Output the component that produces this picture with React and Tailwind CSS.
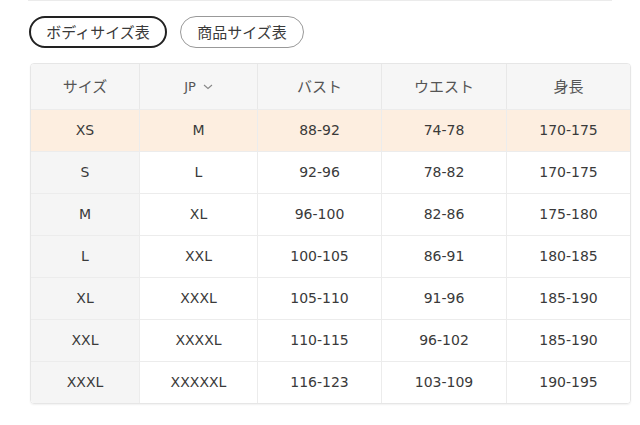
import React, { useState } from 'react';

const rows = [
  ['XS', 'M', '88-92', '74-78', '170-175'],
  ['S', 'L', '92-96', '78-82', '170-175'],
  ['M', 'XL', '96-100', '82-86', '175-180'],
  ['L', 'XXL', '100-105', '86-91', '180-185'],
  ['XL', 'XXXL', '105-110', '91-96', '185-190'],
  ['XXL', 'XXXXL', '110-115', '96-102', '185-190'],
  ['XXXL', 'XXXXXL', '116-123', '103-109', '190-195'],
];

const widths = ['w-[109px]', 'w-[118px]', 'w-[124px]', 'w-[125px]', 'flex-1'];

function App() {
  const [tab, setTab] = useState('body');
  const [selected] = useState(0);

  return (
    <div className="w-[640px] h-[425px] bg-white text-[#3a3a3a]" style={{ fontFamily: '"DejaVu Sans", "Noto Sans CJK JP", sans-serif' }}>
      <div className="mx-[28px] h-px bg-[#ebebeb]" />

      <div className="flex gap-[13px] pl-[29px] pt-[15px]">
        <button
          className={`h-[32px] w-[138px] rounded-full text-[15px] ${tab === 'body' ? 'border-2 border-[#222]' : 'border border-[#999]'}`}
          style={{ fontFamily: '"Noto Sans CJK JP", sans-serif' }}
          onClick={() => setTab('body')}
        >
          ボディサイズ表
        </button>
        <button
          className={`h-[32px] w-[124px] rounded-full text-[15px] ${tab === 'item' ? 'border-2 border-[#222]' : 'border border-[#999]'}`}
          style={{ fontFamily: '"Noto Sans CJK JP", sans-serif' }}
          onClick={() => setTab('item')}
        >
          商品サイズ表
        </button>
      </div>

      <div className="ml-[30px] mt-[15px] w-[601px] rounded-[4px] border border-[#e6e6e6] overflow-hidden shadow-[0_1px_2px_rgba(0,0,0,0.06)]">
        <div className="flex h-[45px] bg-[#f6f6f6] text-[15px] text-[#555]">
          {['サイズ', 'JP', 'バスト', 'ウエスト', '身長'].map((h, i) => (
            <div
              key={h}
              className={`${widths[i]} flex items-center justify-center ${i < 4 ? 'border-r border-[#e8e8e8]' : ''}`}
              style={{ fontFamily: h === 'JP' ? '"DejaVu Sans", sans-serif' : '"Noto Sans CJK JP", sans-serif' }}
            >
              <span className={h === 'JP' ? 'text-[13px]' : ''}>{h}</span>
              {h === 'JP' && (
                <svg className="ml-[7px]" width="10" height="6" viewBox="0 0 10 6" fill="none">
                  <path d="M1 1l4 3.5L9 1" stroke="#888" strokeWidth="1.1" />
                </svg>
              )}
            </div>
          ))}
        </div>
        {rows.map((r, ri) => (
          <div key={r[0]} className={`flex h-[42px] text-[14px] border-t border-[#ececec] ${ri === selected ? 'bg-[#fdeee0]' : 'bg-white'}`}>
            {r.map((c, ci) => (
              <div
                key={ci}
                className={`${widths[ci]} flex items-center justify-center ${ci < 4 ? 'border-r border-[#ececec]' : ''} ${ci === 0 && ri !== selected ? 'bg-[#f5f5f5]' : ''}`}
              >
                {c}
              </div>
            ))}
          </div>
        ))}
      </div>
    </div>
  );
}

export default App;
